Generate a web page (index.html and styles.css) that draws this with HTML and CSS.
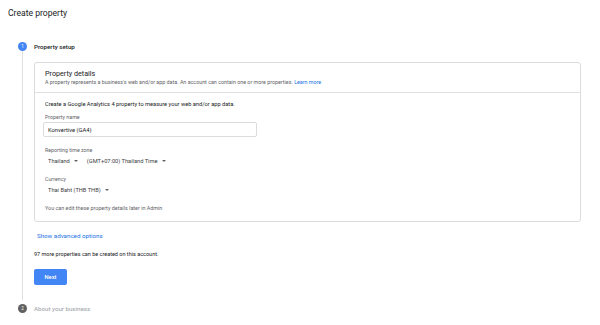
FILE: index.html
```
<!DOCTYPE html>
<html lang="en">
<head>
  <meta charset="UTF-8">
  <title>Create property</title>
  <link rel="stylesheet" href="styles.css">
</head>
<body>

  <h1 class="page-title">Create property</h1>

  <div class="stepper">
    <div class="step">
      <div class="step-head">
        <span class="step-num active">1</span>
        <span class="step-label">Property setup</span>
      </div>
      <div class="step-body">
        <div class="card">
          <div class="card-head">
            <div class="card-title">Property details</div>
            <div class="card-sub">A property represents a business's web and/or app data. An account can contain one or more properties. <a href="#">Learn more</a></div>
          </div>
          <div class="card-body">
            <p class="intro">Create a Google Analytics 4 property to measure your web and/or app data.</p>

            <label class="field-label" for="propName">Property name</label>
            <input class="text-input" id="propName" type="text" value="Konvertive (GA4)">

            <div class="field-label gap">Reporting time zone</div>
            <div class="select-row">
              <span class="select">Thailand <span class="caret"></span></span>
              <span class="select">(GMT+07:00) Thailand Time <span class="caret"></span></span>
            </div>

            <div class="field-label gap">Currency</div>
            <div class="select-row">
              <span class="select">Thai Baht (THB THB) <span class="caret"></span></span>
            </div>

            <p class="hint">You can edit these property details later in Admin</p>
          </div>
        </div>

        <a class="advanced" href="#">Show advanced options</a>
        <p class="quota">97 more properties can be created on this account.</p>
        <button class="next-btn">Next</button>
      </div>
    </div>

    <div class="step">
      <div class="step-head">
        <span class="step-num">2</span>
        <span class="step-label muted">About your business</span>
      </div>
    </div>
  </div>

</body>
</html>
```

FILE: styles.css
```
body {
  margin: 0;
  font-family: Roboto, "Liberation Sans", sans-serif;
  background: #fff;
  color: #3c4043;
}
.page-title {
  margin: 7px 0 0 8px;
  font-size: 8.6px;
  line-height: 12px;
  font-weight: 400;
  color: #202124;
}
.stepper {
  padding: 23px 19px 0 18px;
}
.step-head {
  display: flex;
  align-items: center;
  gap: 7px;
  height: 9px;
}
.step-num {
  width: 9px;
  height: 9px;
  border-radius: 50%;
  background: #616161;
  color: #fff;
  font-size: 4.5px;
  display: flex;
  align-items: center;
  justify-content: center;
  flex-shrink: 0;
}
.step-num.active {
  background: #4285f4;
}
.step-label {
  font-size: 6.2px;
  font-weight: 500;
  color: #202124;
}
.step-label.muted {
  font-weight: 400;
  color: #9aa0a6;
}
.step-body {
  margin: 0 0 4px 4px;
  border-left: 1px solid #e0e0e0;
  padding: 11px 0 15px 11px;
  display: flex;
  flex-direction: column;
  align-items: flex-start;
}
.card {
  align-self: stretch;
  border: 1px solid #dadce0;
  border-radius: 3px;
}
.card-head {
  padding: 6px 10px 6px;
  border-bottom: 1px solid #e0e0e0;
}
.card-title {
  font-size: 7.2px;
  line-height: 9px;
  color: #202124;
}
.card-sub {
  font-size: 5.35px;
  line-height: 8px;
  color: #5f6368;
}
.card-sub a {
  color: #1a73e8;
  text-decoration: none;
}
.card-body {
  padding: 6px 10px 9px;
  display: flex;
  flex-direction: column;
  align-items: flex-start;
}
.intro {
  margin: 0;
  font-size: 5.7px;
  line-height: 10px;
  color: #202124;
}
.field-label {
  display: block;
  margin-top: 4px;
  font-size: 5.3px;
  line-height: 8px;
  color: #5f6368;
}
.field-label.gap {
  margin-top: 9px;
}
.text-input {
  margin: 1px 0 0 -2px;
  width: 214px;
  height: 15px;
  box-sizing: border-box;
  border: 1px solid #dadce0;
  border-radius: 2px;
  padding: 0 4px;
  font-family: inherit;
  font-size: 5.8px;
  color: #202124;
}
.select-row {
  margin-top: 2px;
  display: flex;
  gap: 9px;
  padding-left: 3px;
  height: 10px;
  align-items: center;
}
.select {
  font-size: 5.7px;
  color: #3c4043;
  display: flex;
  align-items: center;
  gap: 4px;
}
.caret {
  width: 0;
  height: 0;
  border-left: 2px solid transparent;
  border-right: 2px solid transparent;
  border-top: 2px solid #5f6368;
}
.hint {
  margin: 9px 0 0;
  font-size: 5.4px;
  line-height: 8px;
  color: #5f6368;
}
.advanced {
  margin: 9px 0 0 3px;
  font-size: 6.2px;
  line-height: 10px;
  font-weight: 400;
  color: #1a73e8;
  text-decoration: none;
}
.quota {
  margin: 9px 0 0;
  font-size: 5.5px;
  line-height: 8px;
  color: #202124;
}
.next-btn {
  margin-top: 11px;
  width: 33px;
  height: 16px;
  border: 0;
  border-radius: 2px;
  background: #4285f4;
  color: #fff;
  font-family: inherit;
  font-size: 5.8px;
  font-weight: 500;
  padding: 0;
}
```
